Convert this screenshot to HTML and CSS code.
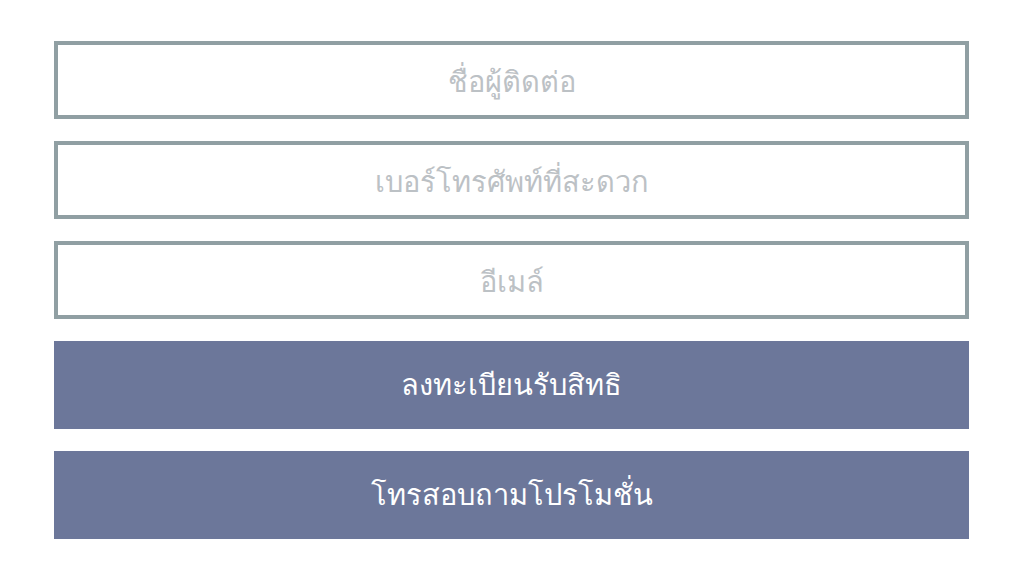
FILE: index.html
```html
<!DOCTYPE html>
<html lang="th">
<head>
    <meta charset="UTF-8">
    <meta name="viewport" content="width=device-width, initial-scale=1.0">
    <title>ลงทะเบียนรับสิทธิ</title>
    <link rel="stylesheet" href="styles.css">
</head>
<body>
    <form class="contact-form" id="contactForm">
        <input type="text" class="field" placeholder="ชื่อผู้ติดต่อ">
        <input type="tel" class="field" placeholder="เบอร์โทรศัพท์ที่สะดวก">
        <input type="email" class="field" placeholder="อีเมล์">
        <button type="button" class="btn">ลงทะเบียนรับสิทธิ</button>
        <button type="button" class="btn">โทรสอบถามโปรโมชั่น</button>
    </form>
</body>
</html>
```

FILE: styles.css
```css
body {
    margin: 0;
    background-color: #fff;
    font-family: "Noto Sans", "DejaVu Sans", sans-serif;
}
.contact-form {
    display: flex;
    flex-direction: column;
    gap: 22px;
    padding: 41px 54px 0;
}
.field {
    box-sizing: border-box;
    height: 78px;
    width: 100%;
    margin: 0;
    border: 4px solid #909fa3;
    background: #fff;
    font-family: inherit;
    font-size: 29px;
    text-align: center;
    color: #555;
    outline: none;
}
.field::placeholder {
    color: #bcc1c5;
}
.btn {
    height: 88px;
    width: 100%;
    margin: 0;
    border: none;
    background-color: #6c779a;
    color: #fff;
    font-family: inherit;
    font-size: 29px;
    cursor: pointer;
}
```
